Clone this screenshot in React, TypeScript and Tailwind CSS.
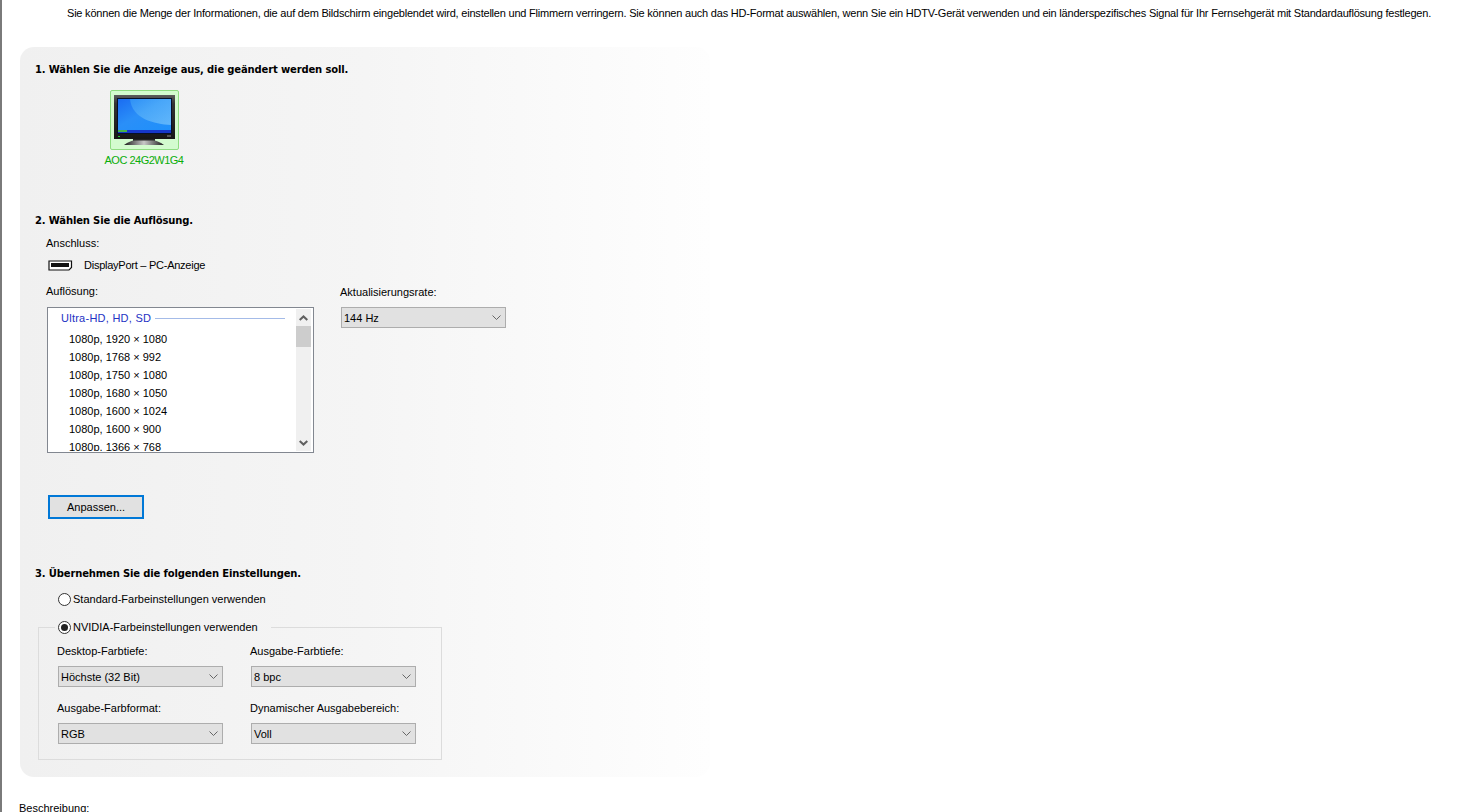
const font = "font-['Liberation_Sans','DejaVu_Sans',sans-serif]";
const bold = "font-['DejaVu_Sans',sans-serif] text-[10px] font-bold tracking-[-0.15px]";

function Chevron({ className = "", thick }: { className?: string; thick?: boolean }) {
  return (
    <svg width="9" height="6" viewBox="0 0 9 6" className={className} fill="none" stroke={thick ? "#606060" : "#666"} strokeWidth={thick ? 2 : 1}>
      <path d={thick ? "M0.7 0.9 L4.5 4.5 L8.3 0.9" : "M0.5 0.5 L4.5 4.5 L8.5 0.5"} />
    </svg>
  );
}

function Select({ value, className = "" }: { value: string; className?: string }) {
  return (
    <div className={`flex h-[21px] w-[165px] items-center justify-between border border-[#adadad] bg-[#e1e1e1] pl-[2px] pr-[3px] text-[11px] leading-none text-black ${className}`}>
      <span className="pt-[1px]">{value}</span>
      <Chevron className="mr-[1px]" />
    </div>
  );
}

function Radio({ checked }: { checked?: boolean }) {
  return (
    <span className="flex size-[13px] shrink-0 items-center justify-center rounded-full border border-[#333] bg-white">
      {checked && <span className="size-[7px] rounded-full bg-[#222]" />}
    </span>
  );
}

function Monitor() {
  return (
    <svg width="61" height="50" viewBox="0 0 61 50" className="block">
      <defs>
        <linearGradient id="screenBg" x1="0" y1="0" x2="1" y2="1">
          <stop offset="0" stopColor="#1a6cf2" />
          <stop offset="0.45" stopColor="#2a8ff8" />
          <stop offset="1" stopColor="#1e90fb" />
        </linearGradient>
        <linearGradient id="swoosh" x1="0" y1="0" x2="1" y2="1">
          <stop offset="0" stopColor="#3aa3f8" />
          <stop offset="1" stopColor="#8cd0fb" />
        </linearGradient>
        <linearGradient id="bezel" x1="0" y1="0" x2="0" y2="1">
          <stop offset="0" stopColor="#5c5c5c" />
          <stop offset="0.2" stopColor="#333" />
          <stop offset="1" stopColor="#161616" />
        </linearGradient>
        <linearGradient id="base" x1="0" y1="0" x2="1" y2="0">
          <stop offset="0" stopColor="#1a1a1a" />
          <stop offset="0.5" stopColor="#c8c8c8" />
          <stop offset="1" stopColor="#1a1a1a" />
        </linearGradient>
      </defs>
      <rect x="0" y="0" width="61" height="44" fill="url(#bezel)" />
      <rect x="3" y="3" width="55" height="36" fill="#06102a" />
      <rect x="4" y="4" width="53" height="31" fill="url(#screenBg)" />
      <path d="M16 4 H57 V30 C40 29 18 24 16 4 Z" fill="url(#swoosh)" opacity="0.6" />
      <rect x="4" y="35" width="53" height="3" fill="#1637c9" />
      <rect x="4" y="35" width="9" height="2" fill="#46b34c" />
      <rect x="4" y="41" width="2" height="1" fill="#22cc33" />
      <rect x="53" y="40" width="4" height="2" fill="#555" />
      <rect x="19" y="44" width="22" height="2" fill="#222" />
      <path d="M10 50 C14 47 18 45.5 20 45.5 H40 C42 45.5 46 47 50 50 Z" fill="url(#base)" />
    </svg>
  );
}

export default function App() {
  return (
    <div className={`${font} h-[812px] w-[1475px] overflow-hidden border-l-2 border-[#7a7a7a] bg-white text-[11px] leading-[14px] text-black`}>
      <p className="ml-[65px] mt-[6px] whitespace-nowrap tracking-[-0.21px]">
        Sie können die Menge der Informationen, die auf dem Bildschirm eingeblendet wird, einstellen und Flimmern verringern. Sie können auch das HD-Format auswählen, wenn Sie ein HDTV-Gerät verwenden und ein länderspezifisches Signal für Ihr Fernsehgerät mit Standardauflösung festlegen.
      </p>

      <section className="ml-[18px] mt-[27px] h-[730px] w-[690px] rounded-[14px] bg-gradient-to-r from-[#f0f0f0] via-[#f5f5f5] to-[#fefefe] pl-[15px] pt-[15px]">
        <h2 className={`${bold} mt-[1px] h-[14px] whitespace-nowrap`}>1. Wählen Sie die Anzeige aus, die geändert werden soll.</h2>

        <div className="ml-[70px] mt-[13px] flex w-[78px] flex-col items-center">
          <div className="flex h-[60px] w-[69px] items-start rounded-[2px] border border-[#8fdc82] bg-[#d3fbcf] pl-[3px] pt-[4px]">
            <Monitor />
          </div>
          <span className="mt-[3px] whitespace-nowrap tracking-[-0.5px] text-[#0aae0a]">AOC 24G2W1G4</span>
        </div>

        <h2 className={`${bold} mt-[47px] h-[14px] whitespace-nowrap`}>2. Wählen Sie die Auflösung.</h2>

        <div className="ml-[11px]">
          <p className="mt-[8px]">Anschluss:</p>
          <div className="mt-[8px] flex items-center">
            <svg width="25" height="11" viewBox="0 0 25 11" className="ml-[2px]">
              <path d="M1 1 H23.5 V7.5 L21 10 H1 Z" fill="#fff" stroke="#111" strokeWidth="1.2" />
              <rect x="3" y="3" width="18" height="4" fill="#111" />
            </svg>
            <span className="ml-[11px] tracking-[-0.25px]">DisplayPort – PC-Anzeige</span>
          </div>

          <div className="mt-[12px] flex items-start">
            <div>
              <p>Auflösung:</p>
              <div className="ml-[1px] mt-[9px] flex h-[146px] w-[267px] overflow-hidden border border-[#828790] bg-white p-[1px]">
                <div className="flex-1 overflow-hidden">
                  <div className="ml-[12px] mt-[1px] flex h-[16px] items-center text-[#2432c4]">
                    <span className="whitespace-nowrap tracking-[0.25px]">Ultra-HD, HD, SD</span>
                    <span className="ml-[4px] mr-[11px] h-px flex-1 bg-[#a4bbe8]" />
                  </div>
                  <ul className="ml-[20px] mt-[4px]">
                    {["1080p, 1920 × 1080", "1080p, 1768 × 992", "1080p, 1750 × 1080", "1080p, 1680 × 1050", "1080p, 1600 × 1024", "1080p, 1600 × 900", "1080p, 1366 × 768"].map((r) => (
                      <li key={r} className="h-[18px] whitespace-pre leading-[18px]">{r}</li>
                    ))}
                  </ul>
                </div>
                <div className="mr-[1px] flex h-full w-[15px] flex-col items-center justify-between bg-[#f0f0f0]">
                  <div className="w-full">
                    <div className="flex h-[17px] items-center justify-center">
                      <Chevron thick className="rotate-180" />
                    </div>
                    <div className="h-[21px] w-full bg-[#cdcdcd]" />
                  </div>
                  <div className="flex h-[17px] items-center justify-center">
                    <Chevron thick />
                  </div>
                </div>
              </div>
            </div>
            <div className="ml-[26px] pt-[1px]">
              <p>Aktualisierungsrate:</p>
              <Select value="144 Hz" className="ml-[1px] mt-[8px]" />
            </div>
          </div>

          <button className="ml-[2px] mt-[42px] flex h-[24px] w-[96px] items-center justify-center border-2 border-[#0078d7] bg-[#e1e1e1] text-[11px]">
            Anpassen...
          </button>
        </div>

        <h2 className={`${bold} mt-[48px] h-[14px] whitespace-nowrap`}>3. Übernehmen Sie die folgenden Einstellungen.</h2>

        <label className="ml-[23px] mt-[11px] flex h-[14px] items-center gap-[2px] whitespace-nowrap">
          <Radio />
          Standard-Farbeinstellungen verwenden
        </label>

        <fieldset className="ml-[3px] mt-[14px] h-[140px] w-[404px] border border-[#dcdcdc] pl-[19px] pt-[10px]">
          <legend className="-ml-[3px] flex h-[14px] items-center gap-[2px] whitespace-nowrap pl-[3px] pr-[13px]">
            <Radio checked />
            NVIDIA-Farbeinstellungen verwenden
          </legend>
          <div className="grid w-[358px] grid-cols-[193px_165px] gap-y-[14px]">
            {[
              ["Desktop-Farbtiefe:", "Höchste (32 Bit)"],
              ["Ausgabe-Farbtiefe:", "8 bpc"],
              ["Ausgabe-Farbformat:", "RGB"],
              ["Dynamischer Ausgabebereich:", "Voll"],
            ].map(([label, value]) => (
              <div key={label}>
                <p className="-ml-[1px] whitespace-nowrap">{label}</p>
                <Select value={value} className="mt-[8px]" />
              </div>
            ))}
          </div>
        </fieldset>
      </section>

      <p className="ml-[17px] mt-[24px] h-[14px]">Beschreibung:</p>
    </div>
  );
}
